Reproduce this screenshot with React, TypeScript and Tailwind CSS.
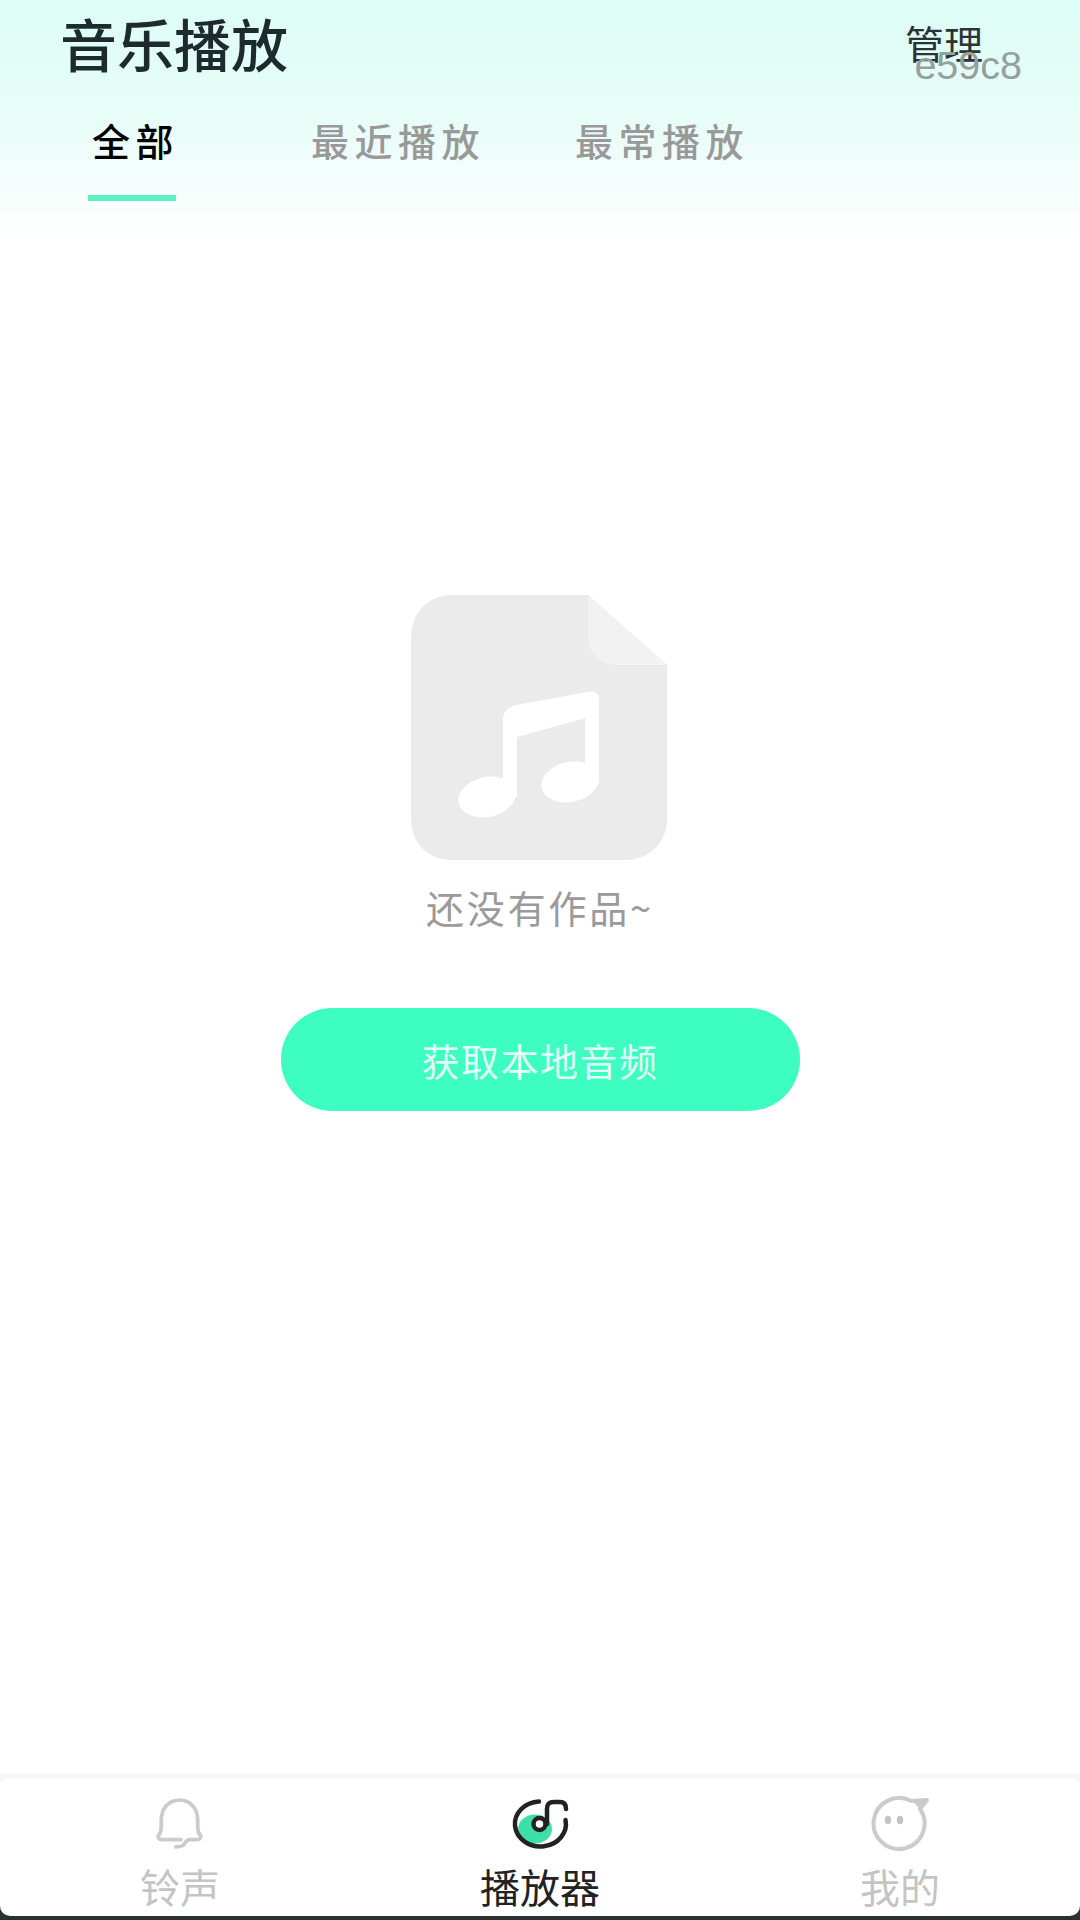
import React from "react";

const CJK = "font-['Noto_Sans_CJK_SC','Noto_Sans',sans-serif]";

/**
 * Empty state artwork: a grey file with a music note
 */
function FileIcon() {
  return (
    <svg className="mr-[3px]" width="258" height="266" viewBox="0 0 258 266">
      <path
        d="M42 0H178L257 70V224C257 248 239 265 215 265H42C18 265 1 248 1 224V42C1 18 18 0 42 0Z"
        fill="#ebebeb"
      />
      <path d="M178 0L257 70H206C190 70 178 58 178 42Z" fill="#f2f2f2" />
      <ellipse cx="77" cy="202" rx="29" ry="20" fill="#fff" transform="rotate(-12 77 202)" />
      <ellipse cx="160" cy="187" rx="29" ry="20" fill="#fff" transform="rotate(-12 160 187)" />
      <path
        d="M93 202V126C93 116 97 113 106 110L178 97C186 96 189 99 189 106V188H175V123L107 142V202Z"
        fill="#fff"
      />
    </svg>
  );
}

function BellIcon() {
  return (
    <svg width="52" height="58" viewBox="0 0 50 54" fill="none" stroke="#cbcbcb" strokeWidth="3.6" strokeLinecap="round" strokeLinejoin="round">
      <path d="M26 42H8C4 42 3 39 5 37C7 35 7 32 7 29V23C7 12 14 4 24.5 4C35 4 42 12 42 23V29C42 32 42 35 44 37C46 39 45 42 41 42H35C32 42 31 43 30 45C29 48 26 49 21 49" />
    </svg>
  );
}

function PlayerIcon() {
  return (
    <svg width="60" height="60" viewBox="0 0 60 60" fill="none">
      <ellipse cx="25" cy="35" rx="17" ry="14.5" fill="#3ee0a9" />
      <path
        d="M29 7.5A25.5 22.5 0 1 0 55.5 26"
        stroke="#222"
        strokeWidth="4.5"
        strokeLinecap="round"
      />
      <circle cx="29.5" cy="30" r="6" fill="#fff" stroke="#222" strokeWidth="4.5" />
      <path
        d="M37 30V15C37 10 39 8 44 8H50C54 8 56 10 56 15"
        stroke="#222"
        strokeWidth="4.5"
        strokeLinecap="round"
      />
    </svg>
  );
}

function MineIcon() {
  return (
    <svg width="60" height="60" viewBox="0 0 60 60" fill="none" stroke="#cbcbcb" strokeWidth="4" strokeLinejoin="round">
      <path d="M50 15A25.5 25.5 0 1 1 41 7L57 6Z" />
      <path d="M42 7L57 6L50 15Z" fill="#cbcbcb" stroke="none" />
      <ellipse cx="18" cy="26" rx="3.2" ry="4.2" fill="#c4c4c4" stroke="none" />
      <ellipse cx="30" cy="26" rx="3.2" ry="4.2" fill="#c4c4c4" stroke="none" />
    </svg>
  );
}

const tabs = [
  { label: "全部", active: true, width: "w-[219px]" },
  { label: "最近播放", active: false, width: "w-[264px]" },
  { label: "最常播放", active: false, width: "w-[180px]" },
];

const navItems = [
  { label: "铃声", icon: <BellIcon />, active: false },
  { label: "播放器", icon: <PlayerIcon />, active: true },
  { label: "我的", icon: <MineIcon />, active: false },
];

export default function App() {
  return (
    <div className={`${CJK} flex h-[1920px] w-[1080px] flex-col overflow-hidden bg-white`}>
      {/* Header */}
      <div className="h-[240px] shrink-0 bg-gradient-to-b from-[#dcfdf5] via-[#e8fdf8] to-white">
        <div className="relative flex items-start justify-between pl-[60px] pr-[97px] pt-[2px]">
          <h1 className="text-[57px] leading-[80px] font-medium text-[#1d2b2e]">音乐播放</h1>
          <span className="mt-[12px] text-[39px] leading-[56px] text-[#2a3335]">管理</span>
          <span className="absolute right-[58px] top-[43px] font-['Liberation_Sans',sans-serif] text-[39.5px] leading-[44px] text-[#94a09e]">
            e59c8
          </span>
        </div>

        {/* Tabs */}
        <div className="mt-[32px] flex pl-[88px]">
          {tabs.map((tab) => (
            <div key={tab.label} className={tab.width}>
              <div
                className={`inline-flex flex-col pl-[4px] text-[38px] leading-[52px] font-medium tracking-[5.5px] ${
                  tab.active ? "text-black" : "text-[#999999]"
                }`}
              >
                {tab.label}
              </div>
              {tab.active && <div className="mt-[29px] h-[6px] w-[88px] bg-[#5cf0c6]" />}
            </div>
          ))}
        </div>
      </div>

      {/* Empty state */}
      <main className="flex flex-1 flex-col items-center pt-[355px]">
        <FileIcon />
        <p className="mt-[19px] text-[38px] leading-[54px] tracking-[2.8px] text-[#9a9a9a]">还没有作品~</p>
        <button className="mt-[74px] flex h-[103px] w-[519px] items-center justify-center rounded-full bg-[#3dfdc1] text-[38px] tracking-[1.5px] text-[#e0fff5]">
          获取本地音频
        </button>
      </main>

      {/* Bottom navigation */}
      <div className="shrink-0 bg-[linear-gradient(#f8f8f8_50%,#2b3033_50%)] pt-[5px] pb-[4px]">
        <nav className="grid h-[138px] grid-cols-3 rounded-[10px] bg-white">
          {navItems.map((item) => (
            <div key={item.label} className="flex flex-col items-center pt-[16px]">
              <div className="flex h-[60px] items-center justify-center">{item.icon}</div>
              <span
                className={`mt-[7px] text-[40px] leading-[50px] ${
                  item.active ? "text-[#222222]" : "text-[#c4c4c4]"
                }`}
              >
                {item.label}
              </span>
            </div>
          ))}
        </nav>
      </div>
    </div>
  );
}
